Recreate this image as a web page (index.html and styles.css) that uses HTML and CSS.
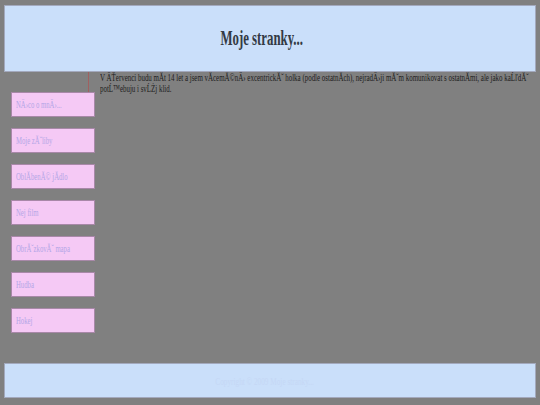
FILE: index.html
```html
<!DOCTYPE html>
<html>
<head>
<meta charset="utf-8">
<title>Moje stranky...</title>
<link rel="stylesheet" href="styles.css">
</head>
<body>
<div class="page">
  <div class="header"><h1 class="title">Moje stranky...</h1></div>
  <div class="content"><p class="content-text">V ÄŤervenci budu mĂ­t 14 let a jsem vĂ­cemĂ©nÄ› excentrickĂˇ holka (podle ostatnĂ­ch), nejradÄ›ji mĂˇm komunikovat s ostatnĂ­mi, ale jako kaĹľdĂˇ potĹ™ebuju i svĹŻj klid.</p></div>
  <div class="nav">
    <div class="nav-item"><span class="nav-label">NÄ›co o mnÄ›...</span></div>
    <div class="nav-item"><span class="nav-label">Moje zĂˇliby</span></div>
    <div class="nav-item"><span class="nav-label">OblĂ­benĂ© jĂ­dlo</span></div>
    <div class="nav-item"><span class="nav-label">Nej film</span></div>
    <div class="nav-item"><span class="nav-label">ObrĂˇzkovĂˇ mapa</span></div>
    <div class="nav-item"><span class="nav-label">Hudba</span></div>
    <div class="nav-item"><span class="nav-label">Hokej</span></div>
  </div>
  <div class="footer"><span class="footer-text">Copyright © 2009 Moje stranky...</span></div>
</div>
</body>
</html>
```
FILE: styles.css
```css
html, body {
  margin: 0;
  padding: 0;
  background: #808080;
  overflow: hidden;
}
.page {
  padding: 5px 4px 0 4px;
  font-family: "Liberation Serif", "Times New Roman", serif;
}
.header {
  height: 65px;
  background: #cadffa;
  border: 1px solid #a3a9bd;
  display: flex;
  align-items: center;
  justify-content: center;
  padding-right: 17px;
}
.title {
  margin: 0;
  font-size: 21px;
  font-weight: bold;
  color: #333a44;
  display: inline-block;
  transform: scaleX(0.61);
  transform-origin: center;
}
.content {
  margin-left: 84px;
  border-left: 1px solid #a06060;
  padding-left: 11px;
  height: 20px;
}
.content-text {
  margin: 0;
  width: 660px;
  font-size: 10.5px;
  line-height: 11px;
  color: #1e1e1e;
  transform: scaleX(0.66);
  transform-origin: left top;
}
.nav {
  margin-left: 7px;
  display: flex;
  flex-direction: column;
  gap: 11px;
}
.nav-item {
  width: 78px;
  height: 23px;
  padding-left: 4px;
  background: #f5c9f5;
  border: 1px solid #a888a8;
  display: flex;
  align-items: center;
}
.nav-label {
  display: inline-block;
  white-space: nowrap;
  font-size: 10.5px;
  color: #b4a6e6;
  transform: scaleX(0.64);
  transform-origin: left center;
}
.footer {
  margin-top: 30px;
  height: 33px;
  background: #cadffa;
  border: 1px solid #a3a9bd;
  display: flex;
  align-items: center;
  justify-content: center;
  padding-right: 10px;
}
.footer-text {
  display: inline-block;
  font-size: 11px;
  color: #c5d7f5;
  transform: scaleX(0.66);
}
```
